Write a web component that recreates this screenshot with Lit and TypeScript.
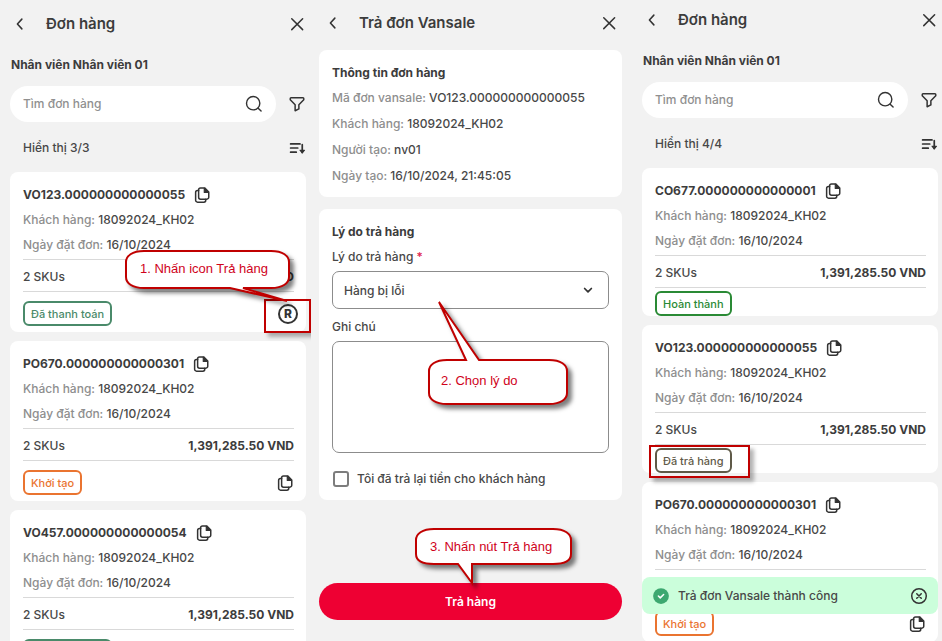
import { LitElement, html, css, svg, nothing } from "lit";
import { customElement } from "lit/decorators.js";
import { classMap } from "lit/directives/class-map.js";

type Status = "paid" | "draft" | "done" | "returned";

interface Order {
  id: string;
  status: Status;
  compact?: boolean;
  action?: "return" | "copy";
  marked?: "action" | "status";
}

const STATUS_LABEL: Record<Status, string> = {
  paid: "Đã thanh toán",
  draft: "Khởi tạo",
  done: "Hoàn thành",
  returned: "Đã trả hàng",
};

const ORDERS_BEFORE: Order[] = [
  { id: "VO123.000000000000055", status: "paid", action: "return", marked: "action" },
  { id: "PO670.000000000000301", status: "draft", action: "copy" },
  { id: "VO457.000000000000054", status: "paid", action: "return" },
];

const ORDERS_AFTER: Order[] = [
  { id: "CO677.000000000000001", status: "done", compact: true },
  { id: "VO123.000000000000055", status: "returned", compact: true, marked: "status" },
  { id: "PO670.000000000000301", status: "draft", action: "copy" },
];

const icon = (cls: string, body: unknown) =>
  html`<svg class="icon ${cls}" viewBox="0 0 24 24" aria-hidden="true">${body}</svg>`;

const backIcon = () => icon("i18", svg`<path d="M14.500 5.500L8.500 12L14.500 18.500" />`);
const closeIcon = () => icon("i18", svg`<path d="M5 5L19.500 19.500M19.500 5L5 19.500" />`);
const searchIcon = () =>
  icon("i20 light", svg`<circle cx="11" cy="11" r="8" /><path d="M17 17L20.500 20.500" />`);
const filterIcon = () =>
  icon(
    "i18",
    svg`<path d="M4 3.500H20A1 1 0 0 1 21 4.500V6.200L14.500 13V18.500L9.500 21V13L3 6.200V4.500A1 1 0 0 1 4 3.500Z" />`,
  );
const sortIcon = () =>
  icon(
    "i18 bold",
    svg`<path d="M3.500 6.500H16M3.500 12H13M3.500 17.500H11" /><path d="M19 7.500V18" /><path class="solid" d="M16 15H22L19 18.500Z" />`,
  );
const copyIcon = () =>
  icon(
    "i18",
    svg`<path d="M10 2.500H15.500L21 8V15A2.500 2.500 0 0 1 18.500 17.500H10A2.500 2.500 0 0 1 7.500 15V5A2.500 2.500 0 0 1 10 2.500Z" />
      <path class="solid" d="M15 3V8.500H20.500Z" />
      <path d="M7.500 6H6A2.500 2.500 0 0 0 3.500 8.500V19A2.500 2.500 0 0 0 6 21.500H14.500A2.500 2.500 0 0 0 17 19V17.500" />`,
  );

@customElement("app-root")
export class AppRoot extends LitElement {
  static styles = css`
    :host {
      display: grid;
      grid-template-columns: 311fr 321fr 310fr;
      height: 100vh;
      background: #f2f2f2;
      color: #484848;
      font: 500 12px/20px Inter, "Noto Sans", sans-serif;
    }
    * {
      box-sizing: border-box;
    }
    button {
      display: inline-flex;
      align-items: center;
      justify-content: center;
      padding: 0;
      border: 0;
      background: none;
      color: inherit;
      font: inherit;
      cursor: pointer;
    }
    h1,
    h2,
    p {
      margin: 0;
      font: inherit;
    }
    .screen {
      position: relative;
      display: flex;
      flex-direction: column;
      min-width: 0;
      overflow: hidden auto;
      scrollbar-width: none;
    }
    .before {
      padding: 4px 5px 0 10px;
    }
    .form {
      padding: 3px 10px 0 8px;
    }
    .after {
      padding: 0 4px 0 10px;
    }

    .icon {
      display: block;
      flex: none;
      fill: none;
      stroke: #333;
      stroke-width: 2;
      stroke-linecap: round;
      stroke-linejoin: round;
    }
    .i18 {
      width: 18px;
      height: 18px;
    }
    .i20 {
      width: 20px;
      height: 20px;
    }
    .light {
      stroke-width: 1.700;
    }
    .bold {
      stroke-width: 2.300;
    }
    .solid {
      fill: #333;
      stroke-width: 1.500;
    }

    .header {
      display: flex;
      align-items: center;
      flex: none;
      gap: 16px;
      height: 40px;
    }
    .form .header {
      padding: 0 4px;
    }
    .header .back {
      width: 20px;
      height: 20px;
    }
    .header h1 {
      flex: 1;
      color: #3c3c3c;
      font-size: 15px;
      font-weight: 600;
    }
    .staff {
      margin-top: 11px;
      padding-left: 1px;
      color: #3c3c3c;
      font-weight: 700;
    }
    .search-row {
      display: flex;
      align-items: center;
      gap: 12px;
      margin-top: 11px;
    }
    .search {
      display: flex;
      align-items: center;
      flex: 1;
      min-width: 0;
      height: 36px;
      padding: 0 12px 0 13px;
      border-radius: 18px;
      background: #fff;
    }
    .search input {
      flex: 1;
      min-width: 0;
      padding: 0;
      border: 0;
      outline: 0;
      background: none;
      color: inherit;
      font: inherit;
    }
    .search input::placeholder {
      color: #909090;
      opacity: 1;
    }
    .count {
      display: flex;
      align-items: center;
      justify-content: space-between;
      margin-top: 16px;
      padding-left: 13px;
    }

    .list {
      display: flex;
      flex-direction: column;
      gap: 9px;
      margin-top: 14px;
    }
    .card {
      border-radius: 8px;
      background: #fff;
    }
    .order {
      padding: 13px 12px 6px 13px;
    }
    .order.compact {
      padding-bottom: 0;
    }
    .id {
      display: flex;
      align-items: center;
      gap: 8px;
      height: 20px;
      color: #3c3c3c;
      font-weight: 700;
    }
    .line {
      margin-top: 5px;
    }
    .muted {
      color: #8e8e8e;
    }
    .totals {
      display: flex;
      align-items: center;
      justify-content: space-between;
      height: 33px;
      margin-top: 4px;
      padding-top: 2px;
      border: solid #d9d9d9;
      border-width: 1px 0;
    }
    .totals strong {
      color: #3c3c3c;
      font-weight: 700;
    }
    .foot {
      display: flex;
      align-items: center;
      justify-content: space-between;
      height: 25px;
      margin-top: 9px;
    }
    .compact .foot {
      margin-top: 3px;
    }
    .anchor {
      position: relative;
      display: flex;
    }
    .badge {
      height: 25px;
      padding: 0 6px;
      border: 2px solid;
      border-radius: 6px;
      font-size: 11px;
      line-height: 22px;
      font-weight: 500;
    }
    .paid {
      color: #4a8a6a;
    }
    .draft {
      color: #ea7430;
    }
    .done {
      color: #2a8a35;
    }
    .returned {
      color: #5f5a48;
    }
    .registered {
      width: 20px;
      height: 20px;
      margin-right: -4px;
      border: 2px solid #333;
      border-radius: 50%;
      color: #333;
      font-size: 12px;
      line-height: 16px;
      font-weight: 800;
    }

    .mark {
      position: absolute;
      z-index: 1;
      border: 2px solid #c00000;
      box-shadow: 4px 4px 4px rgba(0, 0, 0, 0.3);
      pointer-events: none;
    }
    .mark-action {
      inset: -5px -17px -9px -14px;
    }
    .mark-status {
      inset: -3px -18px -5px -6px;
    }
    .callout {
      position: absolute;
      z-index: 2;
      color: #d0021b;
      font: 13px/16px "Liberation Sans", Arial, sans-serif;
      white-space: nowrap;
      pointer-events: none;
    }
    .callout svg {
      display: block;
      overflow: visible;
      fill: #fff;
      stroke: #c00000;
      stroke-width: 2;
      stroke-linejoin: miter;
      filter: drop-shadow(4px 4px 2px rgba(0, 0, 0, 0.5));
    }
    .callout span {
      position: absolute;
      left: 15px;
    }
    .callout-1 {
      right: 4px;
      bottom: 22px;
    }
    .callout-1 span {
      top: 11px;
    }
    .callout-2 {
      top: 30px;
      left: 96px;
    }
    .callout-2 span {
      top: 72px;
      left: 13px;
    }
    .callout-3 {
      bottom: 36px;
      left: 96px;
    }
    .callout-3 span {
      top: 11px;
    }

    .info {
      margin-top: 7px;
      padding: 13px 13px 8px;
    }
    .info h2,
    .reason h2 {
      color: #3c3c3c;
      font-weight: 700;
    }
    .info h2 {
      margin-bottom: 2px;
    }
    .info p {
      line-height: 26px;
    }
    .reason {
      display: flex;
      flex-direction: column;
      margin-top: 12px;
      padding: 13px 13px 11px;
    }
    .field {
      margin: 5px 0 4px;
    }
    .note-label {
      margin-top: 8px;
    }
    .required {
      color: #e0234e;
    }
    .select {
      position: relative;
    }
    .select > .icon {
      position: absolute;
      top: 10px;
      right: 12px;
      pointer-events: none;
    }
    select,
    textarea {
      display: block;
      width: 100%;
      border: 1px solid #8c8c8c;
      border-radius: 7px;
      background: #fff;
      color: inherit;
      font: inherit;
    }
    select {
      height: 38px;
      padding: 2px 11px 0;
      appearance: none;
    }
    textarea {
      height: 112px;
      padding: 8px 12px;
      resize: none;
    }
    .refunded {
      display: flex;
      align-items: center;
      gap: 8px;
      margin: 16px 0 0 1px;
    }
    .refunded input {
      width: 16px;
      height: 16px;
      margin: 0;
      border: 2px solid #7d7d7d;
      border-radius: 3px;
      appearance: none;
    }
    .refunded input:checked {
      background: #ee0033;
    }
    .submit-row {
      position: relative;
      margin-top: 83px;
    }
    .submit {
      width: 100%;
      height: 37px;
      border-radius: 19px;
      background: #ee0033;
      color: #fff;
      font-weight: 600;
    }

    .toast {
      position: absolute;
      right: 4px;
      bottom: 27px;
      left: 10px;
      z-index: 3;
      display: flex;
      align-items: center;
      gap: 8px;
      height: 37px;
      padding: 0 10px;
      border-radius: 8px;
      background: #cbfedb;
    }
    .toast p {
      flex: 1;
    }
    .ok-disc {
      fill: #3da870;
      stroke: none;
    }
    .ok-tick {
      stroke: #fff;
    }
  `;

  private header(title: string) {
    return html`<header class="header">
      <button class="back" aria-label="Quay lại">${backIcon()}</button>
      <h1>${title}</h1>
      <button aria-label="Đóng">${closeIcon()}</button>
    </header>`;
  }

  private callout(n: number, text: string, w: number, h: number, path: string) {
    return html`<div class="callout callout-${n}">
      <svg width=${w} height=${h} viewBox="0 0 ${w} ${h}" aria-hidden="true"><path d=${path} /></svg>
      <span>${text}</span>
    </div>`;
  }

  private order(o: Order) {
    return html`<article class=${classMap({ card: true, order: true, compact: !!o.compact })}>
      <div class="id">${o.id}<button aria-label="Sao chép mã đơn">${copyIcon()}</button></div>
      <p class="line"><span class="muted">Khách hàng:</span> 18092024_KH02</p>
      <p class="line"><span class="muted">Ngày đặt đơn:</span> 16/10/2024</p>
      <div class="totals"><span>2 SKUs</span><strong>1,391,285.50 VND</strong></div>
      <div class="foot">
        <div class="anchor">
          <span class="badge ${o.status}">${STATUS_LABEL[o.status]}</span>
          ${o.marked === "status" ? html`<div class="mark mark-status"></div>` : nothing}
        </div>
        ${o.action
          ? html`<div class="anchor">
              ${o.action === "return"
                ? html`<button class="registered" aria-label="Trả hàng">R</button>`
                : html`<button aria-label="Sao chép đơn">${copyIcon()}</button>`}
              ${o.marked === "action"
                ? html`<div class="mark mark-action"></div>
                    ${this.callout(
                      1,
                      "1. Nhấn icon Trả hàng",
                      165,
                      52,
                      "M19 1H146C158 1 164 6 164 12V27C164 33 158 38 146 38H118L162 51L105 38H19C7 38 1 33 1 27V12C1 6 7 1 19 1Z",
                    )}`
                : nothing}
            </div>`
          : nothing}
      </div>
    </article>`;
  }

  private orderScreen(cls: string, orders: Order[], count: string, toast = false) {
    return html`<section class="screen ${cls}">
      ${this.header("Đơn hàng")}
      <p class="staff">Nhân viên Nhân viên 01</p>
      <div class="search-row">
        <div class="search">
          <input type="search" placeholder="Tìm đơn hàng" aria-label="Tìm đơn hàng" />
          <button aria-label="Tìm">${searchIcon()}</button>
        </div>
        <button aria-label="Lọc">${filterIcon()}</button>
      </div>
      <div class="count">
        <span>Hiển thị ${count}</span>
        <button aria-label="Sắp xếp">${sortIcon()}</button>
      </div>
      <div class="list">${orders.map((o) => this.order(o))}</div>
      ${toast
        ? html`<div class="toast" role="status">
            ${icon("i18", svg`<circle class="ok-disc" cx="12" cy="12" r="10.500" /><path class="ok-tick" d="M8.500 12L11 14.500L15.500 10" />`)}
            <p>Trả đơn Vansale thành công</p>
            <button aria-label="Đóng thông báo">
              ${icon("i18", svg`<circle cx="12" cy="12" r="9.700" /><path d="M9 9L15 15M15 9L9 15" />`)}
            </button>
          </div>`
        : nothing}
    </section>`;
  }

  render() {
    return html`
      ${this.orderScreen("before", ORDERS_BEFORE, "3/3")}
      <section class="screen form">
        ${this.header("Trả đơn Vansale")}
        <div class="card info">
          <h2>Thông tin đơn hàng</h2>
          <p><span class="muted">Mã đơn vansale:</span> VO123.000000000000055</p>
          <p><span class="muted">Khách hàng:</span> 18092024_KH02</p>
          <p><span class="muted">Người tạo:</span> nv01</p>
          <p><span class="muted">Ngày tạo:</span> 16/10/2024, 21:45:05</p>
        </div>
        <div class="card reason">
          <h2>Lý do trả hàng</h2>
          <label class="field" for="reason">Lý do trả hàng <span class="required">*</span></label>
          <div class="select">
            <select id="reason">
              <option>Hàng bị lỗi</option>
            </select>
            ${icon("i18 bold", svg`<path d="M7.500 10L12 14.500L16.500 10" />`)}
            ${this.callout(
              2,
              "2. Chọn lý do",
              140,
              104,
              "M19 59H38L11 1L51 59H121C133 59 139 64 139 70V92C139 98 133 103 121 103H19C7 103 1 98 1 92V70C1 64 7 59 19 59Z",
            )}
          </div>
          <label class="field note-label" for="note">Ghi chú</label>
          <textarea id="note"></textarea>
          <label class="refunded"><input type="checkbox" />Tôi đã trả lại tiền cho khách hàng</label>
        </div>
        <div class="submit-row">
          <button class="submit">Trả hàng</button>
          ${this.callout(
            3,
            "3. Nhấn nút Trả hàng",
            157,
            56,
            "M19 1H138C150 1 156 6 156 12V26C156 32 150 36 138 36H57L57 55L43 36H19C7 36 1 32 1 26V12C1 6 7 1 19 1Z",
          )}
        </div>
      </section>
      ${this.orderScreen("after", ORDERS_AFTER, "4/4", true)}
    `;
  }
}
